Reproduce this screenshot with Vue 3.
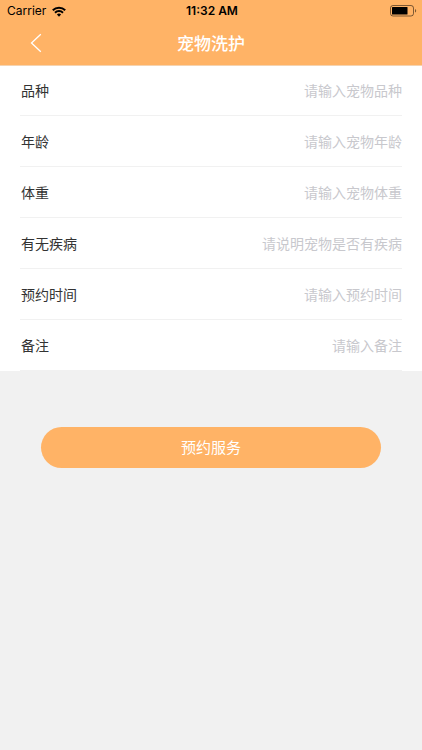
<script setup>
import { reactive } from 'vue'

const fields = [
  { key: 'breed', label: '品种', hint: '请输入宠物品种' },
  { key: 'age', label: '年龄', hint: '请输入宠物年龄' },
  { key: 'weight', label: '体重', hint: '请输入宠物体重' },
  { key: 'illness', label: '有无疾病', hint: '请说明宠物是否有疾病' },
  { key: 'time', label: '预约时间', hint: '请输入预约时间' },
  { key: 'remark', label: '备注', hint: '请输入备注' }
]

const form = reactive({ breed: '', age: '', weight: '', illness: '', time: '', remark: '' })
</script>

<template>
  <div class="page">
    <header class="header">
      <div class="status">
        <div class="carrier">
          <span>Carrier</span>
          <svg class="wifi" width="14" height="11" viewBox="0 0 14 11" aria-hidden="true">
            <path d="M0.8 4.2a8.8 8.8 0 0 1 12.4 0" />
            <path d="M3 6.7a5.7 5.7 0 0 1 8 0" />
            <path class="dot" d="M4.9 8.6a3 3 0 0 1 4.2 0L7 10.8z" />
          </svg>
        </div>
        <span class="clock">11:32 AM</span>
        <div class="power">
          <svg width="27" height="12" viewBox="0 0 27 12" aria-hidden="true">
            <rect class="shell" x="0.5" y="0.5" width="23" height="10.5" rx="2.5" />
            <rect x="2" y="2" width="15.5" height="7.5" rx="0.6" />
            <path class="tip" d="M25 4v3.6c1.6-.5 1.6-3.1 0-3.6z" />
          </svg>
        </div>
      </div>
      <nav class="nav">
        <button class="back" type="button" aria-label="返回">
          <svg width="12" height="20" viewBox="0 0 12 20" aria-hidden="true">
            <path d="M10.8 1.2L1.5 10l9.3 8.8" />
          </svg>
        </button>
        <h1>宠物洗护</h1>
      </nav>
    </header>

    <form @submit.prevent>
      <div class="list">
        <div v-for="f in fields" :key="f.key" class="row">
          <label :for="f.key">{{ f.label }}</label>
          <input :id="f.key" v-model="form[f.key]" type="text" :placeholder="f.hint" />
        </div>
      </div>
      <div class="actions">
        <button class="submit" type="submit">预约服务</button>
      </div>
    </form>
  </div>
</template>

<style>
body {
  margin: 0;
  background: #f1f1f1;
}
</style>

<style scoped>
.page {
  min-height: 100vh;
  background: #f1f1f1;
  font-family: "Noto Sans CJK SC", sans-serif;
  color: #333;
}
.header {
  position: relative;
  background: #ffb366;
  box-shadow: 0 1px 0 #f5d3b0;
}
.status {
  display: grid;
  grid-template-columns: 1fr auto 1fr;
  align-items: center;
  height: 22px;
  padding: 0 5px 0 7px;
  color: #000;
  font-family: Inter, "Liberation Sans", sans-serif;
  font-size: 12px;
  line-height: 22px;
}
.carrier {
  display: flex;
  align-items: center;
  gap: 6px;
}
.wifi path {
  fill: none;
  stroke: #000;
  stroke-width: 2;
}
.wifi .dot {
  fill: #000;
  stroke: none;
}
.clock {
  font-weight: 600;
}
.power {
  display: flex;
  justify-content: flex-end;
}
.shell {
  fill: none;
  stroke: #000;
  stroke-opacity: 0.5;
}
.tip {
  fill-opacity: 0.5;
}
.nav {
  display: grid;
  grid-template-columns: 1fr auto 1fr;
  align-items: center;
  height: 41px;
  padding: 0 20px 2px;
}
.back {
  display: flex;
  justify-self: start;
  padding: 10px;
  border: 0;
  background: none;
}
.back path {
  fill: none;
  stroke: #fff;
  stroke-width: 1.3;
}
h1 {
  margin: 0;
  color: #fff;
  font-size: 17px;
  line-height: 24px;
  font-weight: 500;
}
.list {
  padding: 0 20px;
  background: #fff;
}
.row {
  display: flex;
  align-items: center;
  height: 50px;
  border-bottom: 1px solid #f1f1f1;
}
label {
  padding-left: 1px;
  font-size: 14px;
  line-height: 20px;
}
input {
  flex: 1;
  min-width: 0;
  padding: 0;
  border: 0;
  outline: 0;
  background: none;
  color: #333;
  font-family: inherit;
  font-size: 14px;
  line-height: 20px;
  text-align: right;
}
input::placeholder {
  color: #c8c8cd;
  opacity: 1;
}
.actions {
  padding: 56px 41px;
}
.submit {
  display: block;
  width: 100%;
  height: 41px;
  padding: 0 0 2px;
  border: 0;
  border-radius: 21px;
  background: #ffb366;
  color: #fff;
  font-family: inherit;
  font-size: 15px;
}
</style>
